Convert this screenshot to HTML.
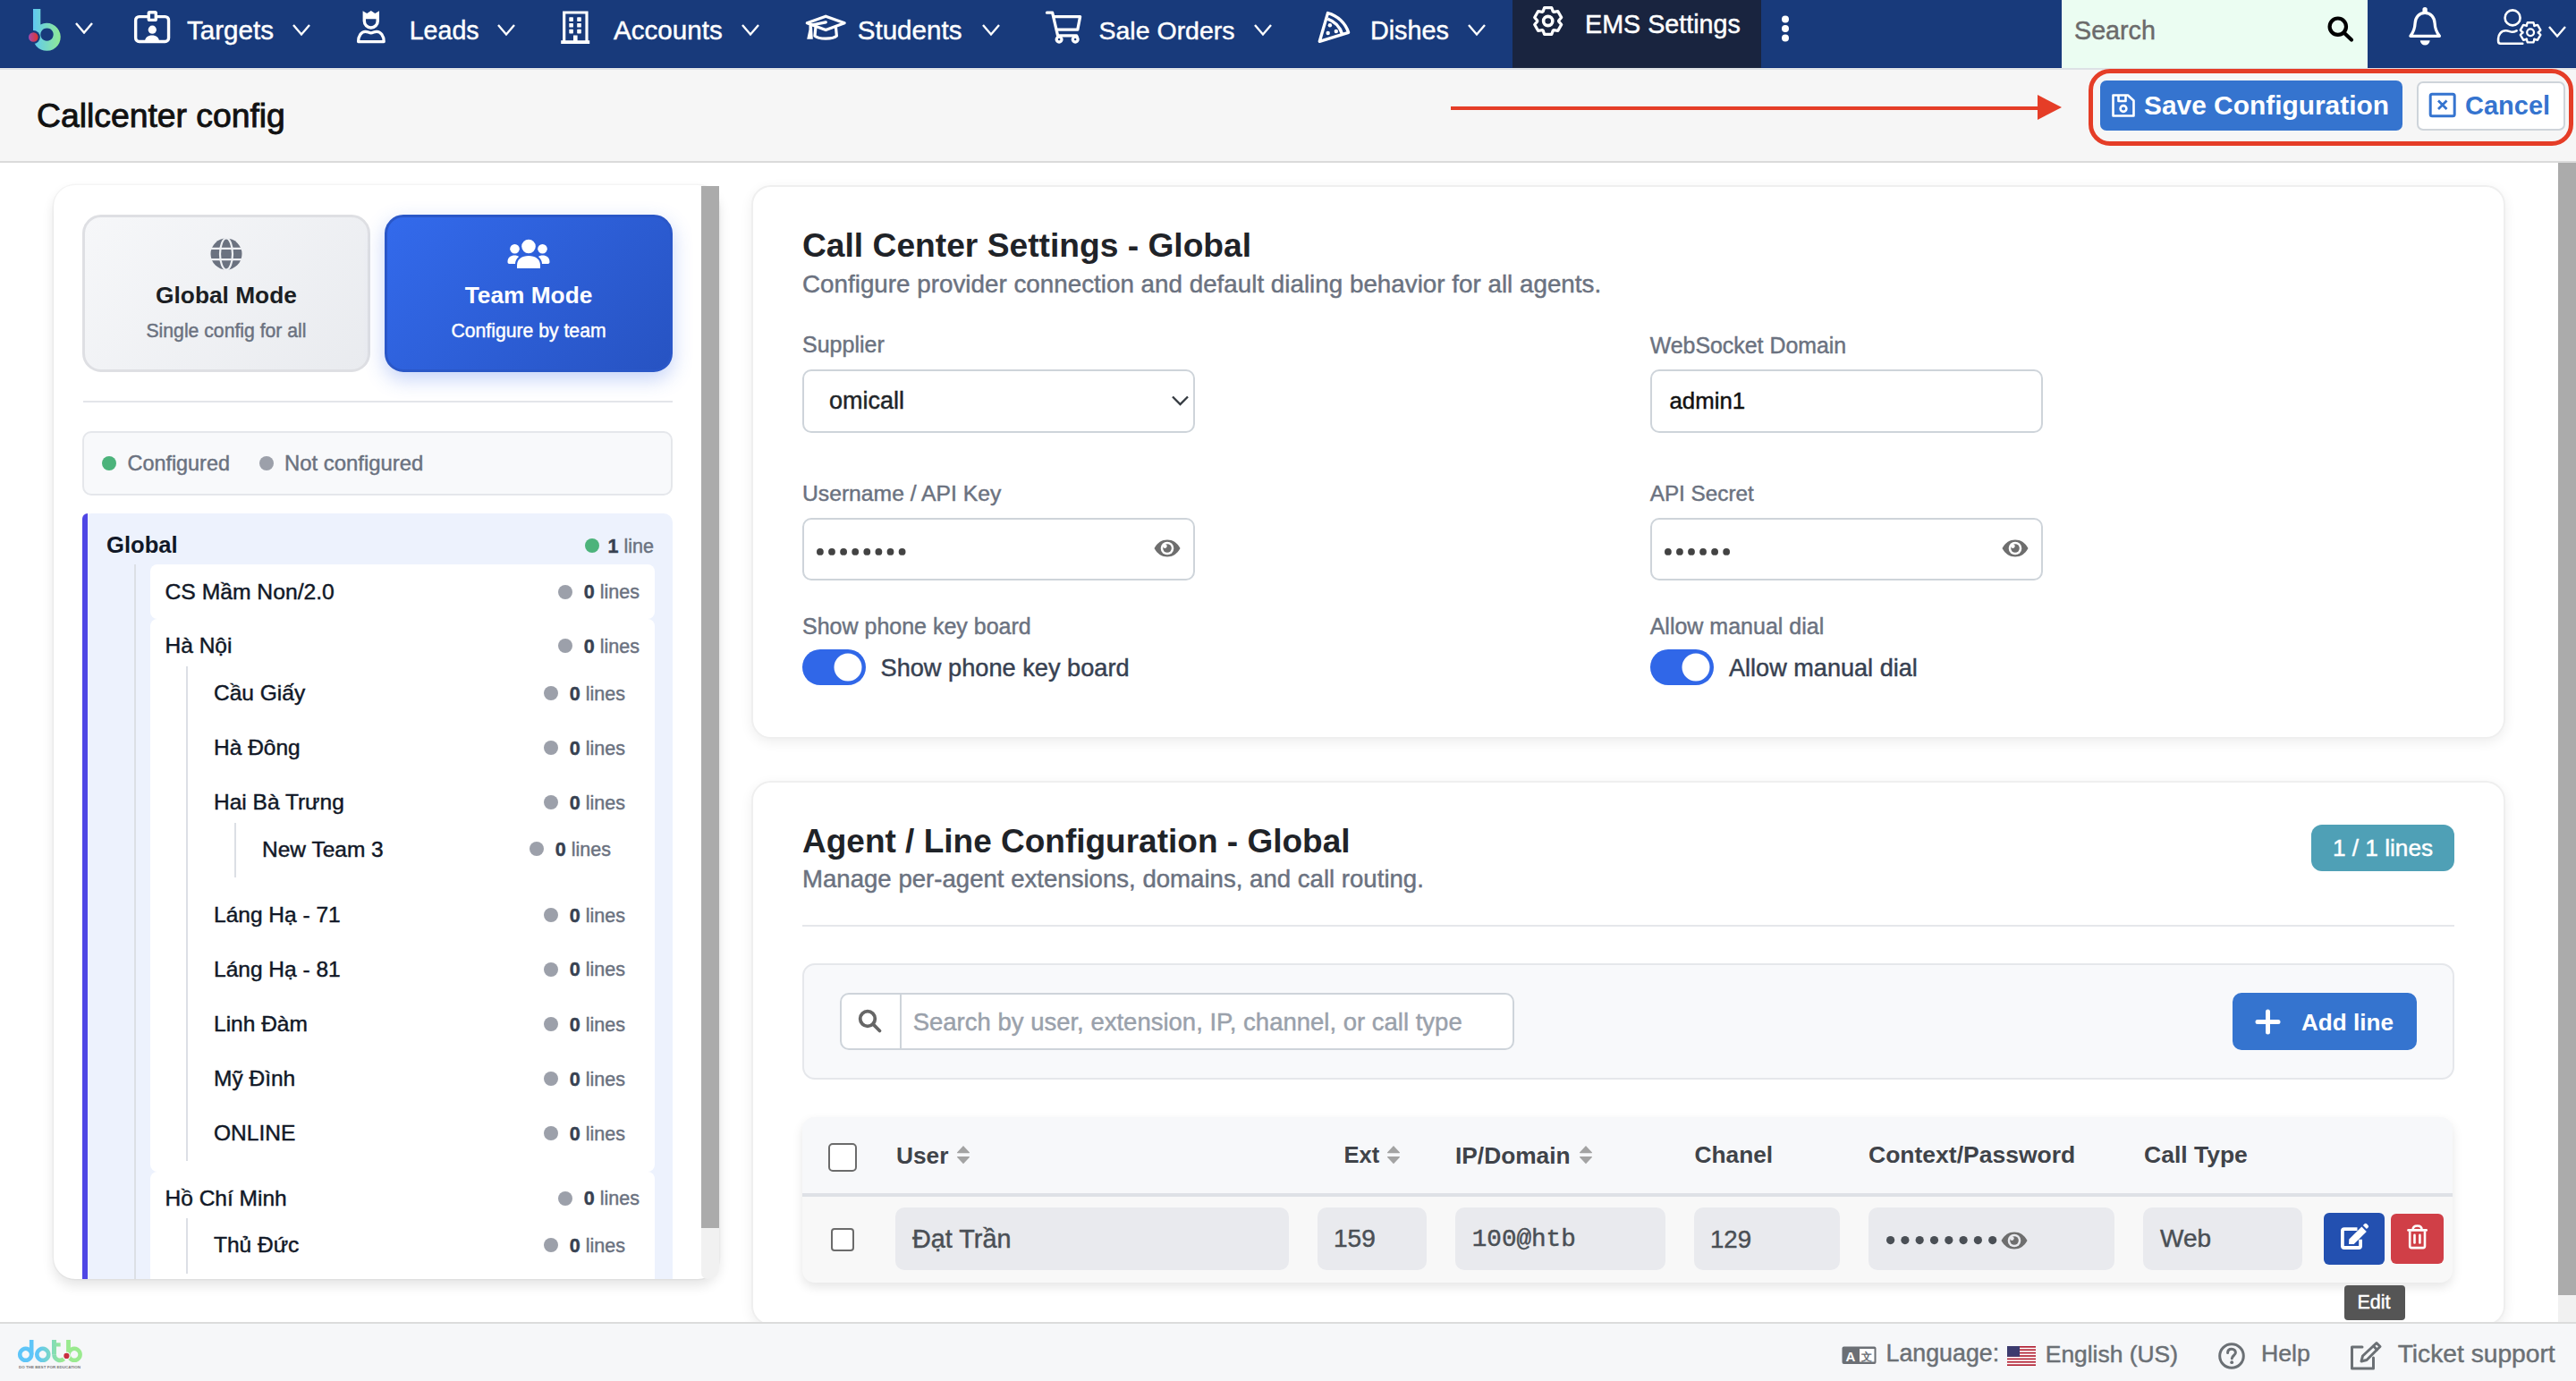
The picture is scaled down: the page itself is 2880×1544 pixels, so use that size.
<!DOCTYPE html><html><head><meta charset="utf-8"><title>Callcenter config</title><style>
html,body{margin:0;padding:0;width:2880px;height:1544px;overflow:hidden;background:#fff;font-family:"Liberation Sans",sans-serif;}
.t{position:absolute;white-space:nowrap;}
.tr{-webkit-text-stroke-width:0.45px;}
.r{position:absolute;box-sizing:border-box;}
</style></head><body><div id="root" style="position:absolute;left:0;top:0;width:2880px;height:1544px;overflow:hidden;transform-origin:0 0;">
<div class="r" style="left:0px;top:0px;width:2880px;height:76px;background:#183a7b;"></div>
<div class="r" style="left:1691px;top:0px;width:278px;height:76px;background:#19243f;"></div>
<div class="r" style="left:2305px;top:0px;width:342px;height:76px;background:#ebfdf2;"></div>
<svg class="r" style="left:26px;top:4px;" width="50" height="56" viewBox="0 0 50 56"><defs><linearGradient id="lg" x1="0" y1="0" x2="1" y2="0"><stop offset="0" stop-color="#5ec8f4"/><stop offset="1" stop-color="#90ea94"/></linearGradient>
<linearGradient id="lr" x1="0" y1="0" x2="1" y2="0"><stop offset="0" stop-color="#a54ab0"/><stop offset="1" stop-color="#e0352a"/></linearGradient></defs>
<path fill="url(#lg)" fill-rule="evenodd" d="M11 6h8.3v17.5A15.5 15.5 0 1 1 11 34.5Z M26.5 27.4a7.2 7.2 0 1 0 0.01 0Z"/>
<circle cx="11.3" cy="37.5" r="7.5" fill="#183a7b"/>
<circle cx="11.3" cy="37.5" r="5.3" fill="url(#lr)"/></svg>
<svg class="r" style="left:83px;top:23.5px;" width="22" height="14.5" viewBox="0 0 22 14.5"><path d="M2 2 L11.0 12.5 L20 2" fill="none" stroke="#fff" stroke-width="2.4"/></svg>
<svg class="r" style="left:140px;top:5px" width="60" height="50" viewBox="140 5 60 50"><g fill="none" stroke="#fff" stroke-width="3.4"><rect x="151.65" y="18.65" width="36.9" height="27.9" rx="4"/><rect x="166.3" y="13.8" width="8" height="8.6" rx="1" fill="#183a7b"/></g><circle cx="170.3" cy="33.2" r="4.6" fill="#fff"/><path d="M162 46.8 C162 42 165.5 39.6 170 39.6 C174.5 39.6 178 42 178 46.8 Z" fill="#fff"/></svg>
<div class="t tr" style="left:209px;top:19.24px;font-size:29.6px;line-height:29.6px;font-weight:400;color:#fff;font-family:'Liberation Sans', sans-serif;">Targets</div>
<svg class="r" style="left:326px;top:26.3px;" width="22" height="14.5" viewBox="0 0 22 14.5"><path d="M2 2 L11.0 12.5 L20 2" fill="none" stroke="#fff" stroke-width="2.4"/></svg>
<svg class="r" style="left:390px;top:5px" width="50" height="50" viewBox="390 5 50 50"><path fill="#fff" fill-rule="evenodd" d="M405.6 12.2 L410.3 14.9 L414.8 12.1 L419.3 14.9 L424 12.2 V23.5 A9.2 9.2 0 0 1 405.6 23.5 Z M409 21.3 H420.5 V23.5 A5.75 5.75 0 0 1 409 23.5 Z"/><path fill="none" stroke="#fff" stroke-width="3.3" stroke-linejoin="round" d="M400.6 46.6 C400.6 40 404 35.3 408.5 35.3 C411 35.3 412.5 36.8 414.8 36.8 C417.1 36.8 418.6 35.3 421.1 35.3 C425.6 35.3 429.2 40 429.2 46.6 Z"/></svg>
<div class="t tr" style="left:457.7px;top:20.09px;font-size:28.6px;line-height:28.6px;font-weight:400;color:#fff;font-family:'Liberation Sans', sans-serif;">Leads</div>
<svg class="r" style="left:554.5px;top:26.3px;" width="22" height="14.5" viewBox="0 0 22 14.5"><path d="M2 2 L11.0 12.5 L20 2" fill="none" stroke="#fff" stroke-width="2.4"/></svg>
<svg class="r" style="left:626px;top:11px;" width="35" height="39" viewBox="0 0 35 39"><path d="M4.7 36 V3 H30 V36" fill="none" stroke="#fff" stroke-width="3.2"/><rect x="1.2" y="34.2" width="32" height="3.8" fill="#fff"/>
<g fill="#fff"><rect x="10.3" y="8.3" width="4.6" height="4.6" rx="0.6"/><rect x="19.2" y="8.3" width="4.6" height="4.6" rx="0.6"/><rect x="10.3" y="15" width="4.6" height="4.6" rx="0.6"/><rect x="19.2" y="15" width="4.6" height="4.6" rx="0.6"/><rect x="10.3" y="21.8" width="4.6" height="4.6" rx="0.6"/><rect x="19.2" y="21.8" width="4.6" height="4.6" rx="0.6"/><rect x="15" y="28.5" width="4.6" height="7" /></g></svg>
<div class="t tr" style="left:686px;top:19.14px;font-size:29.6px;line-height:29.6px;font-weight:400;color:#fff;font-family:'Liberation Sans', sans-serif;">Accounts</div>
<svg class="r" style="left:828px;top:26.2px;" width="22" height="14.5" viewBox="0 0 22 14.5"><path d="M2 2 L11.0 12.5 L20 2" fill="none" stroke="#fff" stroke-width="2.4"/></svg>
<svg class="r" style="left:895px;top:10px" width="60" height="40" viewBox="895 10 60 40"><g fill="none" stroke="#fff" stroke-width="3.2" stroke-linejoin="round" stroke-linecap="round"><path d="M902.3 25.8 L923.2 18.2 L944.2 25.8 L923.2 33.6 Z"/><path d="M923.3 24.9 L906.3 28.3"/><path d="M911.9 30.6 L911 40.2 C913.5 42.6 918 43.2 923.2 43.2 C928.5 43.2 933 42.6 935.4 40.2 L934.5 30.6"/></g><path d="M904.5 28.5 L908 29.5 L908.8 43.7 H902.2 L904.5 33 Z" fill="#fff"/></svg>
<div class="t tr" style="left:958.7px;top:19.24px;font-size:29.6px;line-height:29.6px;font-weight:400;color:#fff;font-family:'Liberation Sans', sans-serif;">Students</div>
<svg class="r" style="left:1096.5px;top:26.2px;" width="22" height="14.5" viewBox="0 0 22 14.5"><path d="M2 2 L11.0 12.5 L20 2" fill="none" stroke="#fff" stroke-width="2.4"/></svg>
<svg class="r" style="left:1162px;top:5px" width="55" height="50" viewBox="1162 5 55 50"><g fill="none" stroke="#fff" stroke-width="3.3" stroke-linejoin="round" stroke-linecap="round"><path d="M1170.5 14.2 H1176.6 L1182.6 39.9 H1203.6 L1204.5 42"/><path d="M1178.2 18.6 H1207.6 L1204.8 33.1 H1181.5"/><circle cx="1184.1" cy="44.1" r="2.9"/><circle cx="1202.2" cy="44.1" r="2.9"/></g></svg>
<div class="t tr" style="left:1228.5px;top:20.17px;font-size:28.5px;line-height:28.5px;font-weight:400;color:#fff;font-family:'Liberation Sans', sans-serif;">Sale Orders</div>
<svg class="r" style="left:1401px;top:26.2px;" width="22" height="14.5" viewBox="0 0 22 14.5"><path d="M2 2 L11.0 12.5 L20 2" fill="none" stroke="#fff" stroke-width="2.4"/></svg>
<svg class="r" style="left:1465px;top:5px" width="50" height="50" viewBox="1465 5 50 50"><g fill="none" stroke="#fff" stroke-width="3.4" stroke-linejoin="round"><path d="M1475.3 46.3 L1484.5 14.6 A33.2 33.2 0 0 1 1507.6 36.3 Z"/><path d="M1484.3 21.2 A26.4 26.4 0 0 1 1500.6 38.3"/></g><g fill="#fff"><circle cx="1486.9" cy="28.2" r="2.2"/><circle cx="1493.8" cy="35" r="2.2"/><circle cx="1484.7" cy="37" r="2.2"/></g></svg>
<div class="t tr" style="left:1531.9px;top:19.92px;font-size:28.8px;line-height:28.8px;font-weight:400;color:#fff;font-family:'Liberation Sans', sans-serif;">Dishes</div>
<svg class="r" style="left:1640px;top:26.2px;" width="22" height="14.5" viewBox="0 0 22 14.5"><path d="M2 2 L11.0 12.5 L20 2" fill="none" stroke="#fff" stroke-width="2.4"/></svg>
<svg class="r" style="left:1705px;top:0px" width="50" height="50" viewBox="1705 0 50 50"><path fill="none" stroke="#fff" stroke-width="3.3" stroke-linejoin="round" d="M1736.30 12.89 L1734.70 8.53 L1726.70 8.53 L1725.10 12.89 A12.0 12.0 0 0 0 1724.31 13.34 L1719.73 12.55 L1715.73 19.48 L1718.71 23.04 A12.0 12.0 0 0 0 1718.71 23.96 L1715.73 27.52 L1719.73 34.45 L1724.31 33.66 A12.0 12.0 0 0 0 1725.10 34.11 L1726.70 38.47 L1734.70 38.47 L1736.30 34.11 A12.0 12.0 0 0 0 1737.09 33.66 L1741.67 34.45 L1745.67 27.52 L1742.69 23.96 A12.0 12.0 0 0 0 1742.69 23.04 L1745.67 19.48 L1741.67 12.55 L1737.09 13.34 A12.0 12.0 0 0 0 1736.30 12.89 Z"/><circle cx="1730.7" cy="23.5" r="5.1" fill="none" stroke="#fff" stroke-width="3.6"/></svg>
<div class="t tr" style="left:1772px;top:13.01px;font-size:28.7px;line-height:28.7px;font-weight:400;color:#fff;font-family:'Liberation Sans', sans-serif;">EMS Settings</div>
<svg class="r" style="left:1990px;top:17px;" width="12" height="32" viewBox="0 0 12 32"><g fill="#fff"><circle cx="6" cy="4.5" r="4"/><circle cx="6" cy="15" r="4"/><circle cx="6" cy="25.5" r="4"/></g></svg>
<div class="t tr" style="left:2319px;top:20.31px;font-size:28.7px;line-height:28.7px;font-weight:400;color:#6b6b6b;font-family:'Liberation Sans', sans-serif;">Search</div>
<svg class="r" style="left:2598px;top:14px;" width="36" height="36" viewBox="0 0 36 36"><g fill="none" stroke="#000" stroke-width="4.2"><circle cx="15.8" cy="15.7" r="9.2"/><path d="M22.5 22.5 L31 30.5" stroke-linecap="round"/></g></svg>
<svg class="r" style="left:2685px;top:0px" width="55" height="56" viewBox="2685 0 55 56"><path fill="none" stroke="#fff" stroke-width="3.3" stroke-linejoin="round" d="M2711.1 14.4 C2704.2 14.4 2700.4 19.6 2700.1 26 C2699.8 32.3 2698.6 35.6 2694.9 40.3 H2727.4 C2723.6 35.6 2722.4 32.3 2722.1 26 C2721.8 19.6 2718 14.4 2711.1 14.4 Z"/><rect x="2708.4" y="8" width="5.4" height="7" rx="2.7" fill="#fff"/><path d="M2705.8 45.2 H2716.6 A5.4 5.4 0 0 1 2705.8 45.2 Z" fill="#fff"/></svg>
<svg class="r" style="left:2785px;top:0px" width="63" height="56" viewBox="2785 0 63 56"><g fill="none" stroke="#fff" stroke-width="2.6" stroke-linecap="round"><circle cx="2809.1" cy="19.9" r="8.5"/><path d="M2813.6 34.3 C2811.8 35.3 2810.2 35.8 2808.6 35.8 C2806.4 35.8 2804.6 34.3 2801.6 34.3 C2796.2 34.3 2793.1 38.6 2793.1 43.3 V46 C2793.1 47.6 2794 48.7 2795.6 48.7 H2820.3"/></g><path fill="none" stroke="#fff" stroke-width="2.4" stroke-linejoin="round" d="M2833.60 28.97 L2832.40 25.18 L2825.80 25.18 L2824.60 28.97 A8.6 8.6 0 0 0 2825.00 28.74 L2821.12 27.88 L2817.82 33.60 L2820.50 36.53 A8.6 8.6 0 0 0 2820.50 36.07 L2817.82 39.00 L2821.12 44.72 L2825.00 43.86 A8.6 8.6 0 0 0 2824.60 43.63 L2825.80 47.42 L2832.40 47.42 L2833.60 43.63 A8.6 8.6 0 0 0 2833.20 43.86 L2837.08 44.72 L2840.38 39.00 L2837.70 36.07 A8.6 8.6 0 0 0 2837.70 36.53 L2840.38 33.60 L2837.08 27.88 L2833.20 28.74 A8.6 8.6 0 0 0 2833.60 28.97 Z"/><circle cx="2829.1" cy="36.3" r="3.9" fill="none" stroke="#fff" stroke-width="2.3"/></svg>
<svg class="r" style="left:2848px;top:28.3px;" width="22" height="14.5" viewBox="0 0 22 14.5"><path d="M2 2 L11.0 12.5 L20 2" fill="none" stroke="#fff" stroke-width="2.4"/></svg>
<div class="r" style="left:0px;top:76px;width:2880px;height:104px;background:#f6f6f6;"></div>
<div class="r" style="left:0px;top:75px;width:1691px;height:1px;background:#0f3077;"></div>
<div class="r" style="left:1969px;top:75px;width:336px;height:1px;background:#0f3077;"></div>
<div class="r" style="left:2647px;top:75px;width:233px;height:1px;background:#0f3077;"></div>
<div class="r" style="left:0px;top:76px;width:2880px;height:2px;background:#dde1e5;"></div>
<div class="r" style="left:0px;top:180px;width:2880px;height:2px;background:#dadada;"></div>
<div class="t tr" style="left:41px;top:111.13px;font-size:37.3px;line-height:37.3px;font-weight:400;color:#111;font-family:'Liberation Sans', sans-serif;-webkit-text-stroke:0.9px #111;">Callcenter config</div>
<div class="r" style="left:1622px;top:119px;width:663px;height:3.5px;background:#e53d27;"></div>
<svg class="r" style="left:2278px;top:106px;" width="28" height="28" viewBox="0 0 28 28"><path d="M0 0 L27 14 L0 28Z" fill="#e53d27"/></svg>
<div class="r" style="left:2335px;top:77px;width:542px;height:86px;border:5px solid #e53d27;border-radius:24px;"></div>
<div class="r" style="left:2348px;top:90px;width:338px;height:56px;background:#3574cf;border-radius:7px;"></div>
<svg class="r" style="left:2360px;top:104px;" width="28" height="28" viewBox="0 0 28 28"><g fill="none" stroke="#fff" stroke-width="2.6" stroke-linejoin="round"><path d="M2.5 2.5 H19 L25.5 8.5 V25.5 H2.5 Z"/><path d="M8.5 2.5 V9 H16.5 V2.5"/><circle cx="14" cy="17.5" r="3.4"/></g></svg>
<div class="t" style="left:2397px;top:103.39px;font-size:29.9px;line-height:29.9px;font-weight:700;color:#fff;font-family:'Liberation Sans', sans-serif;">Save Configuration</div>
<div class="r" style="left:2702px;top:90.5px;width:166px;height:55.0px;background:#fff;border:2px solid #ced4da;border-radius:7px;"></div>
<svg class="r" style="left:2715px;top:103px;" width="32" height="29" viewBox="0 0 32 29"><rect x="2.2" y="2.2" width="27" height="24.5" rx="2" fill="none" stroke="#3574cf" stroke-width="3"/><path d="M11 9.5 L20.5 19 M20.5 9.5 L11 19" stroke="#3574cf" stroke-width="2.8"/></svg>
<div class="t" style="left:2756px;top:104.15px;font-size:29px;line-height:29px;font-weight:700;color:#3574cf;font-family:'Liberation Sans', sans-serif;">Cancel</div>
<div class="r" style="left:60px;top:207px;width:744px;height:1223px;background:#fff;border-radius:24px;box-shadow:0 7px 14px rgba(0,0,0,0.11),0 0 0 1.5px rgba(0,0,0,0.03);overflow:hidden;">
<div class="r" style="left:-60px;top:-207px;width:2880px;height:1544px;">
<div class="r" style="left:92px;top:240px;width:322px;height:176px;border:3.5px solid #dedfe3;border-radius:21px;background:linear-gradient(135deg,#f6f7f9 0%,#e9ebef 100%);"></div>
<svg class="r" style="left:234px;top:265px;" width="38" height="38" viewBox="0 0 38 38"><circle cx="19" cy="19" r="17.5" fill="#6b7280"/><g fill="none" stroke="#eef0f3" stroke-width="2.2"><ellipse cx="19" cy="19" rx="7" ry="17.5"/><path d="M1 12.8 H37 M1 25.2 H37"/></g></svg>
<div class="t" style="left:-747px;width:2000px;text-align:center;top:316.64px;font-size:26.3px;line-height:26.3px;font-weight:700;color:#1b1e23;font-family:'Liberation Sans', sans-serif;">Global Mode</div>
<div class="t tr" style="left:-747px;width:2000px;text-align:center;top:359.05px;font-size:21.2px;line-height:21.2px;font-weight:400;color:#6b7280;font-family:'Liberation Sans', sans-serif;">Single config for all</div>
<div class="r" style="left:430px;top:240px;width:322px;height:176px;border:3.5px solid #2a57c8;border-radius:21px;background:linear-gradient(135deg,#336aec 0%,#2753c2 100%);box-shadow:0 8px 22px rgba(47,98,230,0.28);"></div>
<svg class="r" style="left:566px;top:266px;" width="50" height="36" viewBox="0 0 50 36"><g fill="#fff"><circle cx="25" cy="9.5" r="7.8"/><circle cx="9.5" cy="12.3" r="5.3"/><circle cx="40.5" cy="12.3" r="5.3"/><path d="M12 34 V31 C12 23.5 17.5 20 25 20 C32.5 20 38 23.5 38 31 V34 Z"/><path d="M1.5 27 C1.5 21.5 5 19.5 9.5 19.5 C11.5 19.5 13 20 14 21 C11.5 23 10 26 10 29 H3.5 C2.3 29 1.5 28.3 1.5 27Z"/><path d="M48.5 27 C48.5 21.5 45 19.5 40.5 19.5 C38.5 19.5 37 20 36 21 C38.5 23 40 26 40 29 H46.5 C47.7 29 48.5 28.3 48.5 27Z"/></g></svg>
<div class="t" style="left:-409px;width:2000px;text-align:center;top:316.74px;font-size:26.3px;line-height:26.3px;font-weight:700;color:#fff;font-family:'Liberation Sans', sans-serif;">Team Mode</div>
<div class="t tr" style="left:-409px;width:2000px;text-align:center;top:358.55px;font-size:21.2px;line-height:21.2px;font-weight:400;color:#fff;font-family:'Liberation Sans', sans-serif;">Configure by team</div>
<div class="r" style="left:93px;top:448px;width:659px;height:2px;background:#e3e5ea;"></div>
<div class="r" style="left:92px;top:482px;width:660px;height:72px;background:#f8f9fb;border:2px solid #e5e7eb;border-radius:10px;"></div>
<svg class="r" style="left:114px;top:510px;" width="16" height="16" viewBox="0 0 16 16"><circle cx="8" cy="8" r="8" fill="#4cb37b"/></svg>
<div class="t tr" style="left:142.5px;top:506.69px;font-size:23.4px;line-height:23.4px;font-weight:400;color:#6b7280;font-family:'Liberation Sans', sans-serif;">Configured</div>
<svg class="r" style="left:290px;top:510px;" width="16" height="16" viewBox="0 0 16 16"><circle cx="8" cy="8" r="8" fill="#9ca0aa"/></svg>
<div class="t tr" style="left:318px;top:506.27px;font-size:23.9px;line-height:23.9px;font-weight:400;color:#6b7280;font-family:'Liberation Sans', sans-serif;">Not configured</div>
<div class="r" style="left:92px;top:574px;width:660px;height:926px;background:#edf2fd;border-radius:10px 10px 0 0;"></div>
<div class="r" style="left:92px;top:574px;width:6.200000000000003px;height:926px;background:#4f46e5;border-radius:8px 0 0 0;"></div>
<div class="t" style="left:119px;top:597.33px;font-size:25.6px;line-height:25.6px;font-weight:700;color:#111827;font-family:'Liberation Sans', sans-serif;">Global</div>
<svg class="r" style="left:654px;top:602px;" width="16" height="16" viewBox="0 0 16 16"><circle cx="8" cy="8" r="8" fill="#4cb37b"/></svg>
<div class="t tr" style="right:2149px;top:600.80px;font-size:21.5px;line-height:21.5px;font-weight:400;color:#6b7280;font-family:'Liberation Sans', sans-serif;"><b style="color:#374151">1</b> <span style="color:#6b7280">line</span></div>
<div class="r" style="left:150px;top:631px;width:2px;height:869px;background:#dcdfe5;"></div>
<div class="r" style="left:168px;top:631px;width:564px;height:61px;background:#fff;border-radius:8px;"></div>
<div class="t tr" style="left:184.5px;top:649.69px;font-size:24.7px;line-height:24.7px;font-weight:400;color:#111827;font-family:'Liberation Sans', sans-serif;">CS Mầm Non/2.0</div>
<svg class="r" style="left:624px;top:653.6px;" width="16" height="16" viewBox="0 0 16 16"><circle cx="8" cy="8" r="8" fill="#9ca0aa"/></svg>
<div class="t tr" style="right:2165px;top:652.40px;font-size:21.5px;line-height:21.5px;font-weight:400;color:#6b7280;font-family:'Liberation Sans', sans-serif;"><b style="color:#374151">0</b> <span style="color:#6b7280">lines</span></div>
<div class="r" style="left:168px;top:692px;width:564px;height:618px;background:#fff;border-radius:8px;"></div>
<div class="t tr" style="left:184.5px;top:710.26px;font-size:24.5px;line-height:24.5px;font-weight:400;color:#111827;font-family:'Liberation Sans', sans-serif;">Hà Nội</div>
<svg class="r" style="left:624px;top:714px;" width="16" height="16" viewBox="0 0 16 16"><circle cx="8" cy="8" r="8" fill="#9ca0aa"/></svg>
<div class="t tr" style="right:2165px;top:712.80px;font-size:21.5px;line-height:21.5px;font-weight:400;color:#6b7280;font-family:'Liberation Sans', sans-serif;"><b style="color:#374151">0</b> <span style="color:#6b7280">lines</span></div>
<div class="r" style="left:208px;top:745px;width:2px;height:553px;background:#dcdfe5;"></div>
<div class="t tr" style="left:239px;top:763.26px;font-size:24.5px;line-height:24.5px;font-weight:400;color:#111827;font-family:'Liberation Sans', sans-serif;">Cầu Giấy</div>
<svg class="r" style="left:608px;top:767px;" width="16" height="16" viewBox="0 0 16 16"><circle cx="8" cy="8" r="8" fill="#9ca0aa"/></svg>
<div class="t tr" style="right:2181px;top:765.80px;font-size:21.5px;line-height:21.5px;font-weight:400;color:#6b7280;font-family:'Liberation Sans', sans-serif;"><b style="color:#374151">0</b> <span style="color:#6b7280">lines</span></div>
<div class="t tr" style="left:239px;top:823.96px;font-size:24.5px;line-height:24.5px;font-weight:400;color:#111827;font-family:'Liberation Sans', sans-serif;">Hà Đông</div>
<svg class="r" style="left:608px;top:827.7px;" width="16" height="16" viewBox="0 0 16 16"><circle cx="8" cy="8" r="8" fill="#9ca0aa"/></svg>
<div class="t tr" style="right:2181px;top:826.50px;font-size:21.5px;line-height:21.5px;font-weight:400;color:#6b7280;font-family:'Liberation Sans', sans-serif;"><b style="color:#374151">0</b> <span style="color:#6b7280">lines</span></div>
<div class="t tr" style="left:239px;top:885.06px;font-size:24.5px;line-height:24.5px;font-weight:400;color:#111827;font-family:'Liberation Sans', sans-serif;">Hai Bà Trưng</div>
<svg class="r" style="left:608px;top:888.8px;" width="16" height="16" viewBox="0 0 16 16"><circle cx="8" cy="8" r="8" fill="#9ca0aa"/></svg>
<div class="t tr" style="right:2181px;top:887.60px;font-size:21.5px;line-height:21.5px;font-weight:400;color:#6b7280;font-family:'Liberation Sans', sans-serif;"><b style="color:#374151">0</b> <span style="color:#6b7280">lines</span></div>
<div class="t tr" style="left:239px;top:1011.26px;font-size:24.5px;line-height:24.5px;font-weight:400;color:#111827;font-family:'Liberation Sans', sans-serif;">Láng Hạ - 71</div>
<svg class="r" style="left:608px;top:1015px;" width="16" height="16" viewBox="0 0 16 16"><circle cx="8" cy="8" r="8" fill="#9ca0aa"/></svg>
<div class="t tr" style="right:2181px;top:1013.80px;font-size:21.5px;line-height:21.5px;font-weight:400;color:#6b7280;font-family:'Liberation Sans', sans-serif;"><b style="color:#374151">0</b> <span style="color:#6b7280">lines</span></div>
<div class="t tr" style="left:239px;top:1071.86px;font-size:24.5px;line-height:24.5px;font-weight:400;color:#111827;font-family:'Liberation Sans', sans-serif;">Láng Hạ - 81</div>
<svg class="r" style="left:608px;top:1075.6px;" width="16" height="16" viewBox="0 0 16 16"><circle cx="8" cy="8" r="8" fill="#9ca0aa"/></svg>
<div class="t tr" style="right:2181px;top:1074.40px;font-size:21.5px;line-height:21.5px;font-weight:400;color:#6b7280;font-family:'Liberation Sans', sans-serif;"><b style="color:#374151">0</b> <span style="color:#6b7280">lines</span></div>
<div class="t tr" style="left:239px;top:1133.26px;font-size:24.5px;line-height:24.5px;font-weight:400;color:#111827;font-family:'Liberation Sans', sans-serif;">Linh Đàm</div>
<svg class="r" style="left:608px;top:1137px;" width="16" height="16" viewBox="0 0 16 16"><circle cx="8" cy="8" r="8" fill="#9ca0aa"/></svg>
<div class="t tr" style="right:2181px;top:1135.80px;font-size:21.5px;line-height:21.5px;font-weight:400;color:#6b7280;font-family:'Liberation Sans', sans-serif;"><b style="color:#374151">0</b> <span style="color:#6b7280">lines</span></div>
<div class="t tr" style="left:239px;top:1194.26px;font-size:24.5px;line-height:24.5px;font-weight:400;color:#111827;font-family:'Liberation Sans', sans-serif;">Mỹ Đình</div>
<svg class="r" style="left:608px;top:1198px;" width="16" height="16" viewBox="0 0 16 16"><circle cx="8" cy="8" r="8" fill="#9ca0aa"/></svg>
<div class="t tr" style="right:2181px;top:1196.80px;font-size:21.5px;line-height:21.5px;font-weight:400;color:#6b7280;font-family:'Liberation Sans', sans-serif;"><b style="color:#374151">0</b> <span style="color:#6b7280">lines</span></div>
<div class="t tr" style="left:239px;top:1255.26px;font-size:24.5px;line-height:24.5px;font-weight:400;color:#111827;font-family:'Liberation Sans', sans-serif;">ONLINE</div>
<svg class="r" style="left:608px;top:1259px;" width="16" height="16" viewBox="0 0 16 16"><circle cx="8" cy="8" r="8" fill="#9ca0aa"/></svg>
<div class="t tr" style="right:2181px;top:1257.80px;font-size:21.5px;line-height:21.5px;font-weight:400;color:#6b7280;font-family:'Liberation Sans', sans-serif;"><b style="color:#374151">0</b> <span style="color:#6b7280">lines</span></div>
<div class="r" style="left:262px;top:920px;width:2px;height:61px;background:#dcdfe5;"></div>
<div class="t tr" style="left:293px;top:937.66px;font-size:24.5px;line-height:24.5px;font-weight:400;color:#111827;font-family:'Liberation Sans', sans-serif;">New Team 3</div>
<svg class="r" style="left:592px;top:941.4px;" width="16" height="16" viewBox="0 0 16 16"><circle cx="8" cy="8" r="8" fill="#9ca0aa"/></svg>
<div class="t tr" style="right:2197px;top:940.20px;font-size:21.5px;line-height:21.5px;font-weight:400;color:#6b7280;font-family:'Liberation Sans', sans-serif;"><b style="color:#374151">0</b> <span style="color:#6b7280">lines</span></div>
<div class="r" style="left:168px;top:1310px;width:564px;height:190px;background:#fff;border-radius:8px;"></div>
<div class="t tr" style="left:184.5px;top:1327.76px;font-size:24.5px;line-height:24.5px;font-weight:400;color:#111827;font-family:'Liberation Sans', sans-serif;">Hồ Chí Minh</div>
<svg class="r" style="left:624px;top:1331.5px;" width="16" height="16" viewBox="0 0 16 16"><circle cx="8" cy="8" r="8" fill="#9ca0aa"/></svg>
<div class="t tr" style="right:2165px;top:1330.30px;font-size:21.5px;line-height:21.5px;font-weight:400;color:#6b7280;font-family:'Liberation Sans', sans-serif;"><b style="color:#374151">0</b> <span style="color:#6b7280">lines</span></div>
<div class="r" style="left:208px;top:1362px;width:2px;height:62px;background:#dcdfe5;"></div>
<div class="t tr" style="left:239px;top:1380.26px;font-size:24.5px;line-height:24.5px;font-weight:400;color:#111827;font-family:'Liberation Sans', sans-serif;">Thủ Đức</div>
<svg class="r" style="left:608px;top:1384px;" width="16" height="16" viewBox="0 0 16 16"><circle cx="8" cy="8" r="8" fill="#9ca0aa"/></svg>
<div class="t tr" style="right:2181px;top:1382.80px;font-size:21.5px;line-height:21.5px;font-weight:400;color:#6b7280;font-family:'Liberation Sans', sans-serif;"><b style="color:#374151">0</b> <span style="color:#6b7280">lines</span></div>
</div></div>
<div class="r" style="left:784px;top:208px;width:20px;height:1222px;background:#f1f1f1;border-radius:0 0 22px 12px;"></div>
<div class="r" style="left:784px;top:208px;width:20px;height:1165px;background:#ababab;"></div>
<div class="r" style="left:840px;top:207px;width:1961px;height:619px;background:#fff;border:2px solid #efefef;border-radius:22px;box-shadow:0 4px 14px rgba(0,0,0,0.07);"></div>
<div class="t" style="left:897px;top:255.51px;font-size:37.2px;line-height:37.2px;font-weight:700;color:#1f2328;font-family:'Liberation Sans', sans-serif;">Call Center Settings - Global</div>
<div class="t tr" style="left:897px;top:304.17px;font-size:27.8px;line-height:27.8px;font-weight:400;color:#6b7280;font-family:'Liberation Sans', sans-serif;">Configure provider connection and default dialing behavior for all agents.</div>
<div class="t tr" style="left:897px;top:373.44px;font-size:25px;line-height:25px;font-weight:400;color:#6b7280;font-family:'Liberation Sans', sans-serif;">Supplier</div>
<div class="r" style="left:896.5px;top:413px;width:439.0px;height:71px;border:2px solid #ced4da;border-radius:10px;background:#fff;"></div>
<div class="t tr" style="left:927px;top:435.14px;font-size:27px;line-height:27px;font-weight:400;color:#212529;font-family:'Liberation Sans', sans-serif;">omicall</div>
<svg class="r" style="left:1309px;top:441px;" width="21" height="14" viewBox="0 0 21 14"><path d="M2 2.5 L10.5 11 L19 2.5" fill="none" stroke="#343a40" stroke-width="2.3"/></svg>
<div class="t tr" style="left:1844.7px;top:373.92px;font-size:24.9px;line-height:24.9px;font-weight:400;color:#6b7280;font-family:'Liberation Sans', sans-serif;">WebSocket Domain</div>
<div class="r" style="left:1844.7px;top:413px;width:439.29999999999995px;height:71px;border:2px solid #ced4da;border-radius:10px;background:#fff;"></div>
<div class="t tr" style="left:1866.5px;top:436.16px;font-size:25.8px;line-height:25.8px;font-weight:400;color:#111;font-family:'Liberation Sans', sans-serif;">admin1</div>
<div class="t tr" style="left:897px;top:539.89px;font-size:24.7px;line-height:24.7px;font-weight:400;color:#6b7280;font-family:'Liberation Sans', sans-serif;">Username / API Key</div>
<div class="r" style="left:896.5px;top:578.6px;width:439.0px;height:70.89999999999998px;border:2px solid #ced4da;border-radius:10px;background:#fff;"></div>
<svg class="r" style="left:912.6px;top:612.5px;" width="101" height="8" viewBox="0 0 101 8"><circle cx="3.90" cy="3.9" r="3.9" fill="#434343"/><circle cx="17.00" cy="3.9" r="3.9" fill="#434343"/><circle cx="30.10" cy="3.9" r="3.9" fill="#434343"/><circle cx="43.20" cy="3.9" r="3.9" fill="#434343"/><circle cx="56.30" cy="3.9" r="3.9" fill="#434343"/><circle cx="69.40" cy="3.9" r="3.9" fill="#434343"/><circle cx="82.50" cy="3.9" r="3.9" fill="#434343"/><circle cx="95.60" cy="3.9" r="3.9" fill="#434343"/></svg>
<svg class="r" style="left:1290.3px;top:603.2px;" width="30" height="20" viewBox="0 0 30 20"><path fill="#6e6e6e" d="M0.5 10 C4 3.5 9 0.5 15 0.5 C21 0.5 26 3.5 29.5 10 C26 16.5 21 19.5 15 19.5 C9 19.5 4 16.5 0.5 10Z"/><circle cx="15" cy="10" r="7.3" fill="#fff"/><circle cx="15" cy="10" r="4.8" fill="#6e6e6e"/><circle cx="12.4" cy="7.6" r="2.3" fill="#fff"/></svg>
<div class="t tr" style="left:1844.7px;top:540.23px;font-size:24.3px;line-height:24.3px;font-weight:400;color:#6b7280;font-family:'Liberation Sans', sans-serif;">API Secret</div>
<div class="r" style="left:1844.7px;top:578.6px;width:439.29999999999995px;height:70.89999999999998px;border:2px solid #ced4da;border-radius:10px;background:#fff;"></div>
<svg class="r" style="left:1860.6px;top:612.5px;" width="75" height="8" viewBox="0 0 75 8"><circle cx="3.90" cy="3.9" r="3.9" fill="#434343"/><circle cx="16.95" cy="3.9" r="3.9" fill="#434343"/><circle cx="30.00" cy="3.9" r="3.9" fill="#434343"/><circle cx="43.05" cy="3.9" r="3.9" fill="#434343"/><circle cx="56.10" cy="3.9" r="3.9" fill="#434343"/><circle cx="69.15" cy="3.9" r="3.9" fill="#434343"/></svg>
<svg class="r" style="left:2238.3px;top:603.2px;" width="30" height="20" viewBox="0 0 30 20"><path fill="#6e6e6e" d="M0.5 10 C4 3.5 9 0.5 15 0.5 C21 0.5 26 3.5 29.5 10 C26 16.5 21 19.5 15 19.5 C9 19.5 4 16.5 0.5 10Z"/><circle cx="15" cy="10" r="7.3" fill="#fff"/><circle cx="15" cy="10" r="4.8" fill="#6e6e6e"/><circle cx="12.4" cy="7.6" r="2.3" fill="#fff"/></svg>
<div class="t tr" style="left:897px;top:687.84px;font-size:25px;line-height:25px;font-weight:400;color:#6b7280;font-family:'Liberation Sans', sans-serif;">Show phone key board</div>
<div class="r" style="left:896.6px;top:726px;width:71.0px;height:40px;background:#3067e8;border-radius:20px;"></div>
<svg class="r" style="left:931.6px;top:730px;" width="32" height="32" viewBox="0 0 32 32"><circle cx="16" cy="16" r="15.5" fill="#fff"/></svg>
<div class="t tr" style="left:984.5px;top:732.58px;font-size:27.2px;line-height:27.2px;font-weight:400;color:#374151;font-family:'Liberation Sans', sans-serif;">Show phone key board</div>
<div class="t tr" style="left:1844.7px;top:687.84px;font-size:25px;line-height:25px;font-weight:400;color:#6b7280;font-family:'Liberation Sans', sans-serif;">Allow manual dial</div>
<div class="r" style="left:1844.7px;top:726px;width:71.0px;height:40px;background:#3067e8;border-radius:20px;"></div>
<svg class="r" style="left:1879.7px;top:730px;" width="32" height="32" viewBox="0 0 32 32"><circle cx="16" cy="16" r="15.5" fill="#fff"/></svg>
<div class="t tr" style="left:1933px;top:732.66px;font-size:27.1px;line-height:27.1px;font-weight:400;color:#374151;font-family:'Liberation Sans', sans-serif;">Allow manual dial</div>
<div class="r" style="left:840px;top:873px;width:1961px;height:609px;background:#fff;border:2px solid #efefef;border-radius:22px;box-shadow:0 4px 14px rgba(0,0,0,0.07);"></div>
<div class="t" style="left:897px;top:921.68px;font-size:37px;line-height:37px;font-weight:700;color:#1f2328;font-family:'Liberation Sans', sans-serif;">Agent / Line Configuration - Global</div>
<div class="t tr" style="left:897px;top:969.14px;font-size:27.6px;line-height:27.6px;font-weight:400;color:#6b7280;font-family:'Liberation Sans', sans-serif;">Manage per-agent extensions, domains, and call routing.</div>
<div class="r" style="left:2584px;top:922px;width:160px;height:52px;background:#4fa0b6;border-radius:12px;"></div>
<div class="t tr" style="left:1664px;width:2000px;text-align:center;top:934.82px;font-size:26.2px;line-height:26.2px;font-weight:400;color:#fff;font-family:'Liberation Sans', sans-serif;">1 / 1 lines</div>
<div class="r" style="left:897px;top:1034px;width:1847px;height:2px;background:#e5e7eb;"></div>
<div class="r" style="left:896.5px;top:1076.5px;width:1847.5px;height:130.5px;background:#f8f9fb;border:2px solid #e5e7eb;border-radius:14px;"></div>
<div class="r" style="left:939px;top:1110px;width:754px;height:64px;background:#fff;border:2px solid #ced4da;border-radius:10px;"></div>
<div class="r" style="left:1006px;top:1111px;width:2px;height:62px;background:#ced4da;"></div>
<svg class="r" style="left:958px;top:1127px;" width="30" height="30" viewBox="0 0 30 30"><g fill="none" stroke="#666" stroke-width="3.8"><circle cx="12" cy="12" r="8.3"/><path d="M18.2 18.2 L25.5 25.5" stroke-linecap="round"/></g></svg>
<div class="t tr" style="left:1020.7px;top:1128.72px;font-size:27.5px;line-height:27.5px;font-weight:400;color:#9aa1ab;font-family:'Liberation Sans', sans-serif;">Search by user, extension, IP, channel, or call type</div>
<div class="r" style="left:2496px;top:1110px;width:206px;height:64px;background:#3574cf;border-radius:10px;"></div>
<svg class="r" style="left:2521px;top:1128px;" width="30" height="30" viewBox="0 0 30 30"><path d="M14.5 3 V26 M3 14.5 H26" stroke="#fff" stroke-width="5" stroke-linecap="round"/></svg>
<div class="t" style="left:2573px;top:1129.51px;font-size:26.1px;line-height:26.1px;font-weight:700;color:#fff;font-family:'Liberation Sans', sans-serif;">Add line</div>
<div class="r" style="left:897.4px;top:1249px;width:1844.9px;height:185px;background:#f8f8f8;border-radius:14px;box-shadow:0 5px 12px rgba(0,0,0,0.10);"></div>
<div class="r" style="left:897.4px;top:1249px;width:1844.9px;height:85px;background:#f7f8fa;border-radius:14px 14px 0 0;"></div>
<div class="r" style="left:897.4px;top:1334px;width:1844.9px;height:4px;background:#dee1e6;"></div>
<div class="r" style="left:926px;top:1278px;width:32px;height:32px;border:2px solid #6b6b6b;border-radius:5px;background:#fff;"></div>
<div class="t" style="left:1002px;top:1278.74px;font-size:26.3px;line-height:26.3px;font-weight:700;color:#3f4349;font-family:'Liberation Sans', sans-serif;">User</div>
<svg class="r" style="left:1069px;top:1280px;" width="16" height="24" viewBox="0 0 16 24"><path d="M8 1 L14.8 8.2 Q15.5 9.2 14.3 9.2 H1.7 Q0.5 9.2 1.2 8.2Z M8 21.3 L14.8 14.1 Q15.5 13.1 14.3 13.1 H1.7 Q0.5 13.1 1.2 14.1Z" fill="#a3a3a3"/></svg>
<div class="t" style="left:1502.5px;top:1279.41px;font-size:25.5px;line-height:25.5px;font-weight:700;color:#3f4349;font-family:'Liberation Sans', sans-serif;">Ext</div>
<svg class="r" style="left:1550px;top:1280px;" width="16" height="24" viewBox="0 0 16 24"><path d="M8 1 L14.8 8.2 Q15.5 9.2 14.3 9.2 H1.7 Q0.5 9.2 1.2 8.2Z M8 21.3 L14.8 14.1 Q15.5 13.1 14.3 13.1 H1.7 Q0.5 13.1 1.2 14.1Z" fill="#a3a3a3"/></svg>
<div class="t" style="left:1627px;top:1278.74px;font-size:26.3px;line-height:26.3px;font-weight:700;color:#3f4349;font-family:'Liberation Sans', sans-serif;">IP/Domain</div>
<svg class="r" style="left:1764.6px;top:1280px;" width="16" height="24" viewBox="0 0 16 24"><path d="M8 1 L14.8 8.2 Q15.5 9.2 14.3 9.2 H1.7 Q0.5 9.2 1.2 8.2Z M8 21.3 L14.8 14.1 Q15.5 13.1 14.3 13.1 H1.7 Q0.5 13.1 1.2 14.1Z" fill="#a3a3a3"/></svg>
<div class="t" style="left:1894.5px;top:1278.44px;font-size:26.3px;line-height:26.3px;font-weight:700;color:#3f4349;font-family:'Liberation Sans', sans-serif;">Chanel</div>
<div class="t" style="left:2089px;top:1278.27px;font-size:26.5px;line-height:26.5px;font-weight:700;color:#3f4349;font-family:'Liberation Sans', sans-serif;">Context/Password</div>
<div class="t" style="left:2397px;top:1278.27px;font-size:26.5px;line-height:26.5px;font-weight:700;color:#3f4349;font-family:'Liberation Sans', sans-serif;">Call Type</div>
<div class="r" style="left:929px;top:1373px;width:26px;height:26px;border:2px solid #6b6b6b;border-radius:4px;background:#fff;"></div>
<div class="r" style="left:1001px;top:1350px;width:440px;height:70px;background:#e9eaee;border-radius:10px;"></div>
<div class="r" style="left:1473px;top:1350px;width:122px;height:70px;background:#e9eaee;border-radius:10px;"></div>
<div class="r" style="left:1627px;top:1350px;width:235px;height:70px;background:#e9eaee;border-radius:10px;"></div>
<div class="r" style="left:1894px;top:1350px;width:163px;height:70px;background:#e9eaee;border-radius:10px;"></div>
<div class="r" style="left:2089px;top:1350px;width:275px;height:70px;background:#e9eaee;border-radius:10px;"></div>
<div class="r" style="left:2396px;top:1350px;width:178px;height:70px;background:#e9eaee;border-radius:10px;"></div>
<div class="t tr" style="left:1020px;top:1370.62px;font-size:28.8px;line-height:28.8px;font-weight:400;color:#4a4f55;font-family:'Liberation Sans', sans-serif;">Đạt Trần</div>
<div class="t tr" style="left:1491px;top:1371.30px;font-size:28px;line-height:28px;font-weight:400;color:#4a4f55;font-family:'Liberation Sans', sans-serif;">159</div>
<div class="t tr" style="left:1645.8px;top:1371.64px;font-size:27.6px;line-height:27.6px;font-weight:400;color:#4a4f55;font-family:'Liberation Mono', monospace;">100@htb</div>
<div class="t tr" style="left:1912px;top:1371.64px;font-size:27.6px;line-height:27.6px;font-weight:400;color:#4a4f55;font-family:'Liberation Sans', sans-serif;">129</div>
<svg class="r" style="left:2109px;top:1382.4px;" width="125" height="10" viewBox="0 0 125 10"><circle cx="4.60" cy="4.6" r="4.6" fill="#4a4f55"/><circle cx="20.90" cy="4.6" r="4.6" fill="#4a4f55"/><circle cx="37.20" cy="4.6" r="4.6" fill="#4a4f55"/><circle cx="53.50" cy="4.6" r="4.6" fill="#4a4f55"/><circle cx="69.80" cy="4.6" r="4.6" fill="#4a4f55"/><circle cx="86.10" cy="4.6" r="4.6" fill="#4a4f55"/><circle cx="102.40" cy="4.6" r="4.6" fill="#4a4f55"/><circle cx="118.70" cy="4.6" r="4.6" fill="#4a4f55"/></svg>
<svg class="r" style="left:2237.2px;top:1377.2px;" width="30" height="20" viewBox="0 0 30 20"><path fill="#6e6e6e" d="M0.5 10 C4 3.5 9 0.5 15 0.5 C21 0.5 26 3.5 29.5 10 C26 16.5 21 19.5 15 19.5 C9 19.5 4 16.5 0.5 10Z"/><circle cx="15" cy="10" r="7.3" fill="#e9eaee"/><circle cx="15" cy="10" r="4.8" fill="#6e6e6e"/><circle cx="12.4" cy="7.6" r="2.3" fill="#e9eaee"/></svg>
<div class="t tr" style="left:2415px;top:1371.30px;font-size:28px;line-height:28px;font-weight:400;color:#4a4f55;font-family:'Liberation Sans', sans-serif;">Web</div>
<div class="r" style="left:2598px;top:1355.6px;width:68.40000000000009px;height:58.40000000000009px;background:#2350b0;border-radius:6px;"></div>
<svg class="r" style="left:2600px;top:1360px" width="65" height="50" viewBox="2600 1360 65 50"><path fill="none" stroke="#fff" stroke-width="3.8" d="M2635.5 1374.2 H2621 C2619.8 1374.2 2618.9 1375.1 2618.9 1376.3 V1392.9 C2618.9 1394.1 2619.8 1395 2621 1395 H2637 C2638.2 1395 2639.1 1394.1 2639.1 1392.9 V1385.8"/><path fill="none" stroke="#2350b0" stroke-width="2" d="M2626 1391 L2647 1370"/><path fill="#fff" d="M2626 1391 L2626.3 1385.6 L2640.4 1371.5 L2645.8 1376.9 L2631.7 1391 Z"/><path fill="#fff" d="M2641.9 1370 L2643.6 1368.3 Q2644.8 1367.2 2646 1368.3 L2647.6 1369.9 Q2648.8 1371.1 2647.6 1372.3 L2645.9 1374 Z"/></svg>
<div class="r" style="left:2673px;top:1357px;width:59px;height:55.59999999999991px;background:#d03f47;border-radius:6px;"></div>
<svg class="r" style="left:2685px;top:1365px" width="35" height="35" viewBox="2685 1365 35 35"><rect x="2691.2" y="1373.9" width="22.8" height="2.9" rx="1.4" fill="#fff"/><path fill="none" stroke="#fff" stroke-width="2.6" d="M2697.6 1375 C2697.6 1372 2699.6 1370.5 2702.6 1370.5 C2705.6 1370.5 2707.6 1372 2707.6 1375"/><path fill="none" stroke="#fff" stroke-width="2.6" d="M2694.2 1376.5 V1393.3 C2694.2 1394.5 2695 1395.1 2696.2 1395.1 H2709 C2710.2 1395.1 2711 1394.5 2711 1393.3 V1376.5"/><rect x="2698.2" y="1379.6" width="2.6" height="11.2" rx="1.3" fill="#fff"/><rect x="2704.1" y="1379.6" width="2.6" height="11.2" rx="1.3" fill="#fff"/></svg>
<div class="r" style="left:2621px;top:1437px;width:68px;height:39.40000000000009px;background:#555;border-radius:4px;"></div>
<div class="t tr" style="left:1654px;width:2000px;text-align:center;top:1445.80px;font-size:21.5px;line-height:21.5px;font-weight:400;color:#fff;font-family:'Liberation Sans', sans-serif;">Edit</div>
<div class="r" style="left:2860px;top:182px;width:20px;height:1296px;background:#f1f1f1;"></div>
<div class="r" style="left:2860px;top:182px;width:20px;height:1266px;background:#ababab;"></div>
<div class="r" style="left:0px;top:1478px;width:2880px;height:66px;background:#f6f7f9;border-top:2.5px solid #dcdcdc;"></div>
<svg class="r" style="left:10px;top:1490px" width="90" height="45" viewBox="10 1490 90 45"><defs><linearGradient id="fg" gradientUnits="userSpaceOnUse" x1="42" y1="0" x2="70" y2="0"><stop offset="0" stop-color="#5ec5f8"/><stop offset="1" stop-color="#9aea8f"/></linearGradient></defs><g fill="url(#fg)" fill-rule="evenodd"><path d="M28.7 1505.5 A8.8 8.8 0 1 0 28.71 1505.5 Z M28.7 1510.1 A4.2 4.2 0 1 1 28.69 1510.1 Z"/><rect x="32.9" y="1498" width="4.6" height="16.3"/><path d="M47.8 1505.5 A8.8 8.8 0 1 0 47.81 1505.5 Z M47.8 1510.1 A4.2 4.2 0 1 1 47.79 1510.1 Z"/><rect x="58" y="1498" width="5" height="16.3"/><rect x="62" y="1501.3" width="5.7" height="4.2"/><path d="M83.1 1505.5 A8.8 8.8 0 1 0 83.11 1505.5 Z M83.1 1510.1 A4.2 4.2 0 1 1 83.09 1510.1 Z"/><rect x="74.1" y="1498" width="4.8" height="16.3"/></g><path d="M60.5 1514.3 A6.6 6.6 0 0 0 71.5 1519.2" fill="none" stroke="url(#fg)" stroke-width="4.7"/><circle cx="74.4" cy="1515.9" r="4.3" fill="#f6f7f9"/><circle cx="74.4" cy="1515.9" r="3.1" fill="#c8303f"/><text x="21" y="1530.2" font-size="3.6" font-family="Liberation Sans" font-weight="700" fill="#7a7a7a" textLength="69" lengthAdjust="spacingAndGlyphs">DO THE BEST FOR EDUCATION</text></svg>
<svg class="r" style="left:2059px;top:1505px;" width="40" height="21" viewBox="0 0 40 21"><rect x="0.5" y="0.5" width="38" height="19.5" rx="2" fill="#6b6f75"/><rect x="20" y="3" width="16.5" height="14.5" fill="#fff"/><text x="4.5" y="16.5" font-size="15" font-weight="700" font-family="Liberation Sans" fill="#fff">A</text><text x="21.5" y="15.5" font-size="12" font-weight="700" font-family="Liberation Sans" fill="#6b6f75">文</text></svg>
<div class="t tr" style="left:2108.5px;top:1500.31px;font-size:26.8px;line-height:26.8px;font-weight:400;color:#6b7075;font-family:'Liberation Sans', sans-serif;">Language:</div>
<svg class="r" style="left:2244px;top:1505px;" width="32" height="22" viewBox="0 0 32 22"><rect width="32" height="22" fill="#fff"/><rect y="0.00" width="32" height="1.69" fill="#b22234"/><rect y="3.38" width="32" height="1.69" fill="#b22234"/><rect y="6.77" width="32" height="1.69" fill="#b22234"/><rect y="10.15" width="32" height="1.69" fill="#b22234"/><rect y="13.54" width="32" height="1.69" fill="#b22234"/><rect y="16.92" width="32" height="1.69" fill="#b22234"/><rect y="20.31" width="32" height="1.69" fill="#b22234"/><rect width="14" height="11.8" fill="#3c3b6e"/></svg>
<div class="t tr" style="left:2286.8px;top:1500.65px;font-size:26.4px;line-height:26.4px;font-weight:400;color:#6b7075;font-family:'Liberation Sans', sans-serif;">English (US)</div>
<svg class="r" style="left:2479px;top:1500px;" width="32" height="32" viewBox="0 0 32 32"><circle cx="16" cy="16" r="13.3" fill="none" stroke="#6b7075" stroke-width="3"/><path d="M11.6 12.5 C11.6 9.8 13.5 8.3 16 8.3 C18.6 8.3 20.4 10 20.4 12.3 C20.4 15.5 16.3 15.5 16.3 18.8" fill="none" stroke="#6b7075" stroke-width="3" stroke-linecap="round"/><circle cx="16.2" cy="23.2" r="1.9" fill="#6b7075"/></svg>
<div class="t tr" style="left:2528px;top:1500.40px;font-size:26.7px;line-height:26.7px;font-weight:400;color:#6b7075;font-family:'Liberation Sans', sans-serif;">Help</div>
<svg class="r" style="left:2626px;top:1499px;" width="38" height="34" viewBox="0 0 38 34"><g fill="none" stroke="#6b7075" stroke-width="3" stroke-linejoin="round" stroke-linecap="round"><path d="M15 7 H3.5 V31 H27.5 V19"/><path d="M31 2.5 L35 6.5 L20 21.5 L14 23 L15.5 17Z"/><path d="M27.5 6 L31.5 10"/></g></svg>
<div class="t tr" style="left:2680.7px;top:1499.13px;font-size:28.2px;line-height:28.2px;font-weight:400;color:#6b7075;font-family:'Liberation Sans', sans-serif;">Ticket support</div>
</div><script>(function(){var w=window.innerWidth||2880;var s=w/2880;if(Math.abs(s-1)>0.02){var r=document.getElementById("root");r.style.transform="scale("+s+")";document.body.style.width=w+"px";document.body.style.height=(1544*s)+"px";document.documentElement.style.width=w+"px";document.documentElement.style.height=(1544*s)+"px";}})();</script></body></html>
